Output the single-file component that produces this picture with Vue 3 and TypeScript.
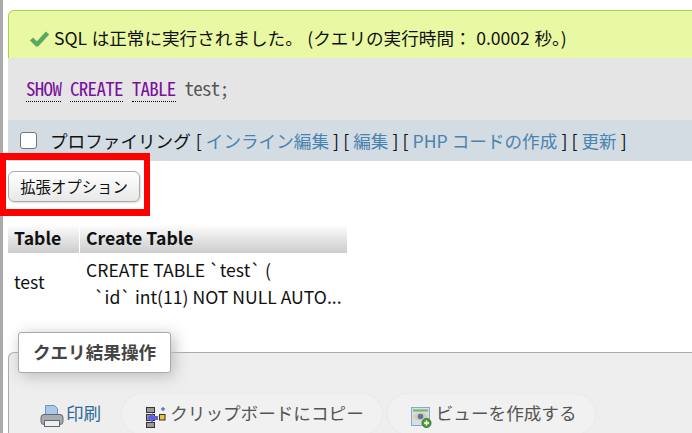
<script setup lang="ts">
const keywords: string[] = ['SHOW', 'CREATE', 'TABLE']
const links: string[] = ['インライン編集', '編集', 'PHP コードの作成', '更新']
</script>

<template>
  <div class="page">
    <div class="success">
      <svg class="check" width="21" height="17" viewBox="0 0 21 17">
        <path d="M2.5 9 L8 14.5 L18.5 3" fill="none" stroke="#5ba863" stroke-width="4.4" stroke-linejoin="round" />
      </svg>
      <span>SQL は正常に実行されました。 (クエリの実行時間： 0.0002 秒。)</span>
    </div>
    <div class="sql">
      <template v-for="k in keywords" :key="k"><span class="kw">{{ k }}</span>{{ ' ' }}</template><span>test;</span>
    </div>
    <div class="tools">
      <span class="box"></span>
      <span class="prof">プロファイリング</span>
      <span class="bracket-list">
        <template v-for="(l, i) in links" :key="l">
          <span v-if="i > 0">{{ ' ' }}</span>[ <a class="link">{{ l }}</a> ]
        </template>
      </span>
    </div>
    <div class="options">
      <button class="btn" type="button">拡張オプション</button>
      <div class="annotation"></div>
    </div>
    <table class="result">
      <thead>
        <tr><th class="c1">Table</th><th class="c2">Create Table</th></tr>
      </thead>
      <tbody>
        <tr>
          <td class="name">test</td>
          <td>CREATE TABLE `test` (<br />&nbsp; `id` int(11) NOT NULL AUTO...</td>
        </tr>
      </tbody>
    </table>
    <fieldset class="ops">
      <legend class="legend">クエリ結果操作</legend>
      <div class="actions">
        <a class="action plain">
          <svg class="icon" width="24" height="24" viewBox="0 0 24 24">
            <path d="M5.5 0.5h9l3 3v9h-12z" fill="#a9c8ea" stroke="#6f94c0" />
            <rect x="1" y="9.5" width="22" height="10" rx="3" fill="#a8acb0" stroke="#63676b" />
            <rect x="4.5" y="15.5" width="15" height="6" fill="#eceff2" stroke="#63676b" />
          </svg>
          <span class="label">印刷</span>
        </a>
        <a class="action pill copy">
          <svg class="icon" width="22" height="24" viewBox="0 0 22 24">
            <rect x="1.5" y="2.5" width="8" height="5" fill="#9a9a9a" stroke="#333" />
            <rect x="1.5" y="9.5" width="8" height="6" fill="#9a9a9a" stroke="#333" />
            <rect x="1.5" y="17.5" width="8" height="5" fill="#9a9a9a" stroke="#333" />
            <path d="M2 13l6-5v3h5v4H8v3z" fill="#5f5fdc" />
            <rect x="14.5" y="9.5" width="5.5" height="5.5" fill="#f2c230" stroke="#333" />
            <path d="M18 2v4M16 4h4" stroke="#6a6ae0" stroke-width="1.4" />
          </svg>
          <span class="label">クリップボードにコピー</span>
        </a>
        <a class="action pill">
          <svg class="icon" width="22" height="24" viewBox="0 0 22 24">
            <rect x="0.5" y="2.5" width="18" height="18" fill="#d6dee8" stroke="#88a8d0" />
            <path d="M2 5.5h15" stroke="#6cba5a" stroke-width="2" />
            <ellipse cx="9.5" cy="11.5" rx="7" ry="4" fill="#e3c9a8" />
            <circle cx="9.5" cy="11.5" r="2.8" fill="#5078b8" />
            <circle cx="15.5" cy="18" r="4.5" fill="#4f9e3a" stroke="#2f7a25" />
            <path d="M15.5 15.5v5M13 18h5" stroke="#fff" stroke-width="1.6" />
          </svg>
          <span class="label">ビューを作成する</span>
        </a>
      </div>
    </fieldset>
  </div>
</template>

<style>
html, body { margin: 0; background: #fff; }
</style>

<style scoped>
.page {
  position: relative;
  box-sizing: border-box;
  width: 692px;
  height: 433px;
  overflow: hidden;
  padding: 10px 0 0 8px;
  background: linear-gradient(to right, #aaa 3px, #fff 3px);
  font-family: "Noto Sans CJK JP", "Noto Sans", sans-serif;
  font-size: 17.6px;
  color: #111;
}
.success {
  box-sizing: border-box;
  height: 48px;
  margin-right: -1px;
  display: flex;
  align-items: center;
  gap: 4px;
  padding: 6px 0 0 20px;
  background: #e9f9a3;
  border: 1px solid #a6d44a;
  border-bottom: 0;
  border-radius: 6px 0 0 0;
  white-space: nowrap;
  word-spacing: 0.6px;
}
.check { flex: none; margin-top: 2px; }
.sql {
  box-sizing: border-box;
  height: 62px;
  padding: 16px 0 0 18px;
  background: #e5e5e5;
  font-family: "Noto Sans Mono CJK JP", "Noto Sans Mono", "DejaVu Sans Mono", monospace;
  font-size: 19px;
  letter-spacing: -0.7px;
  line-height: 28px;
  color: #555;
  white-space: pre;
}
.kw {
  color: #7b0f9e;
  border-bottom: 1px dotted #000;
}
.tools {
  box-sizing: border-box;
  height: 41px;
  display: flex;
  align-items: center;
  background: #d3dce3;
  padding-left: 12px;
  white-space: nowrap;
  word-spacing: 0.15px;
}
.box {
  box-sizing: border-box;
  width: 17px;
  height: 17px;
  background: #fff;
  border: 1px solid #767676;
  border-radius: 3px;
  margin-right: 13px;
}
.prof { margin-right: 5px; }
.link { color: #4a83b0; }
.options {
  height: 62px;
  display: flex;
  align-items: flex-start;
  padding-top: 10px;
  box-sizing: border-box;
}
.btn {
  box-sizing: border-box;
  width: 132px;
  height: 31px;
  padding: 0 0 2px;
  font: inherit;
  font-size: 15.4px;
  color: #111;
  border: 1px solid #aaa;
  border-radius: 6px;
  background: linear-gradient(#fff, #e8e8e8);
  box-shadow: 1px 1px 2px #ddd;
}
.annotation {
  position: absolute;
  left: 0;
  top: 153px;
  box-sizing: border-box;
  width: 150px;
  height: 63px;
  border: 7px solid #f00;
  border-left-width: 6px;
  border-right-width: 6px;
  pointer-events: none;
}
.result {
  border-collapse: separate;
  border-spacing: 0;
  margin-top: 1px;
  width: 339px;
  table-layout: fixed;
}
.result th {
  height: 29px;
  padding: 0 6px 1px;
  text-align: left;
  font-weight: 700;
  background: linear-gradient(#fff, #ccc);
  box-sizing: border-box;
  line-height: 22px;
}
.c1 { width: 72px; border-right: 1px solid #fff; }
.result td {
  padding: 3px 6px;
  line-height: 27px;
  white-space: nowrap;
  overflow: hidden;
}
.result td.name { padding-bottom: 6px; }
.ops {
  box-sizing: border-box;
  margin: 19px 0 0 0;
  padding: 0 0 0 9px;
  min-width: 0;
  height: 120px;
  border: 1px solid #aaa;
  border-right: 0;
  border-radius: 6px 0 0 0;
  background: #eee;
}
.legend {
  box-sizing: border-box;
  width: 153px;
  height: 41px;
  margin: 0 auto 0 0;
  padding: 0;
  text-align: center;
  line-height: 38px;
  font-weight: 700;
  color: #444;
  background: #fff;
  border: 1px solid #aaa;
  border-radius: 3px;
  box-shadow: 3px 3px 15px #bbb;
}
.actions {
  display: flex;
  align-items: center;
  gap: 6px;
  margin: 21px 0 0 22px;
}
.action {
  display: flex;
  align-items: center;
  height: 40px;
  color: #2f6a9a;
  white-space: nowrap;
}
.icon { margin-top: 6px; }
.label { padding-bottom: 4px; }
.plain { margin-right: 15px; }
.plain .icon { margin-right: 2px; }
.pill {
  padding: 0 18px 0 23px;
  border-radius: 20px;
  background: #f1f1f1;
  box-shadow: 0 0 3px #e4e4e4;
  color: #555;
}
.pill .icon { margin-right: 3px; }
</style>
